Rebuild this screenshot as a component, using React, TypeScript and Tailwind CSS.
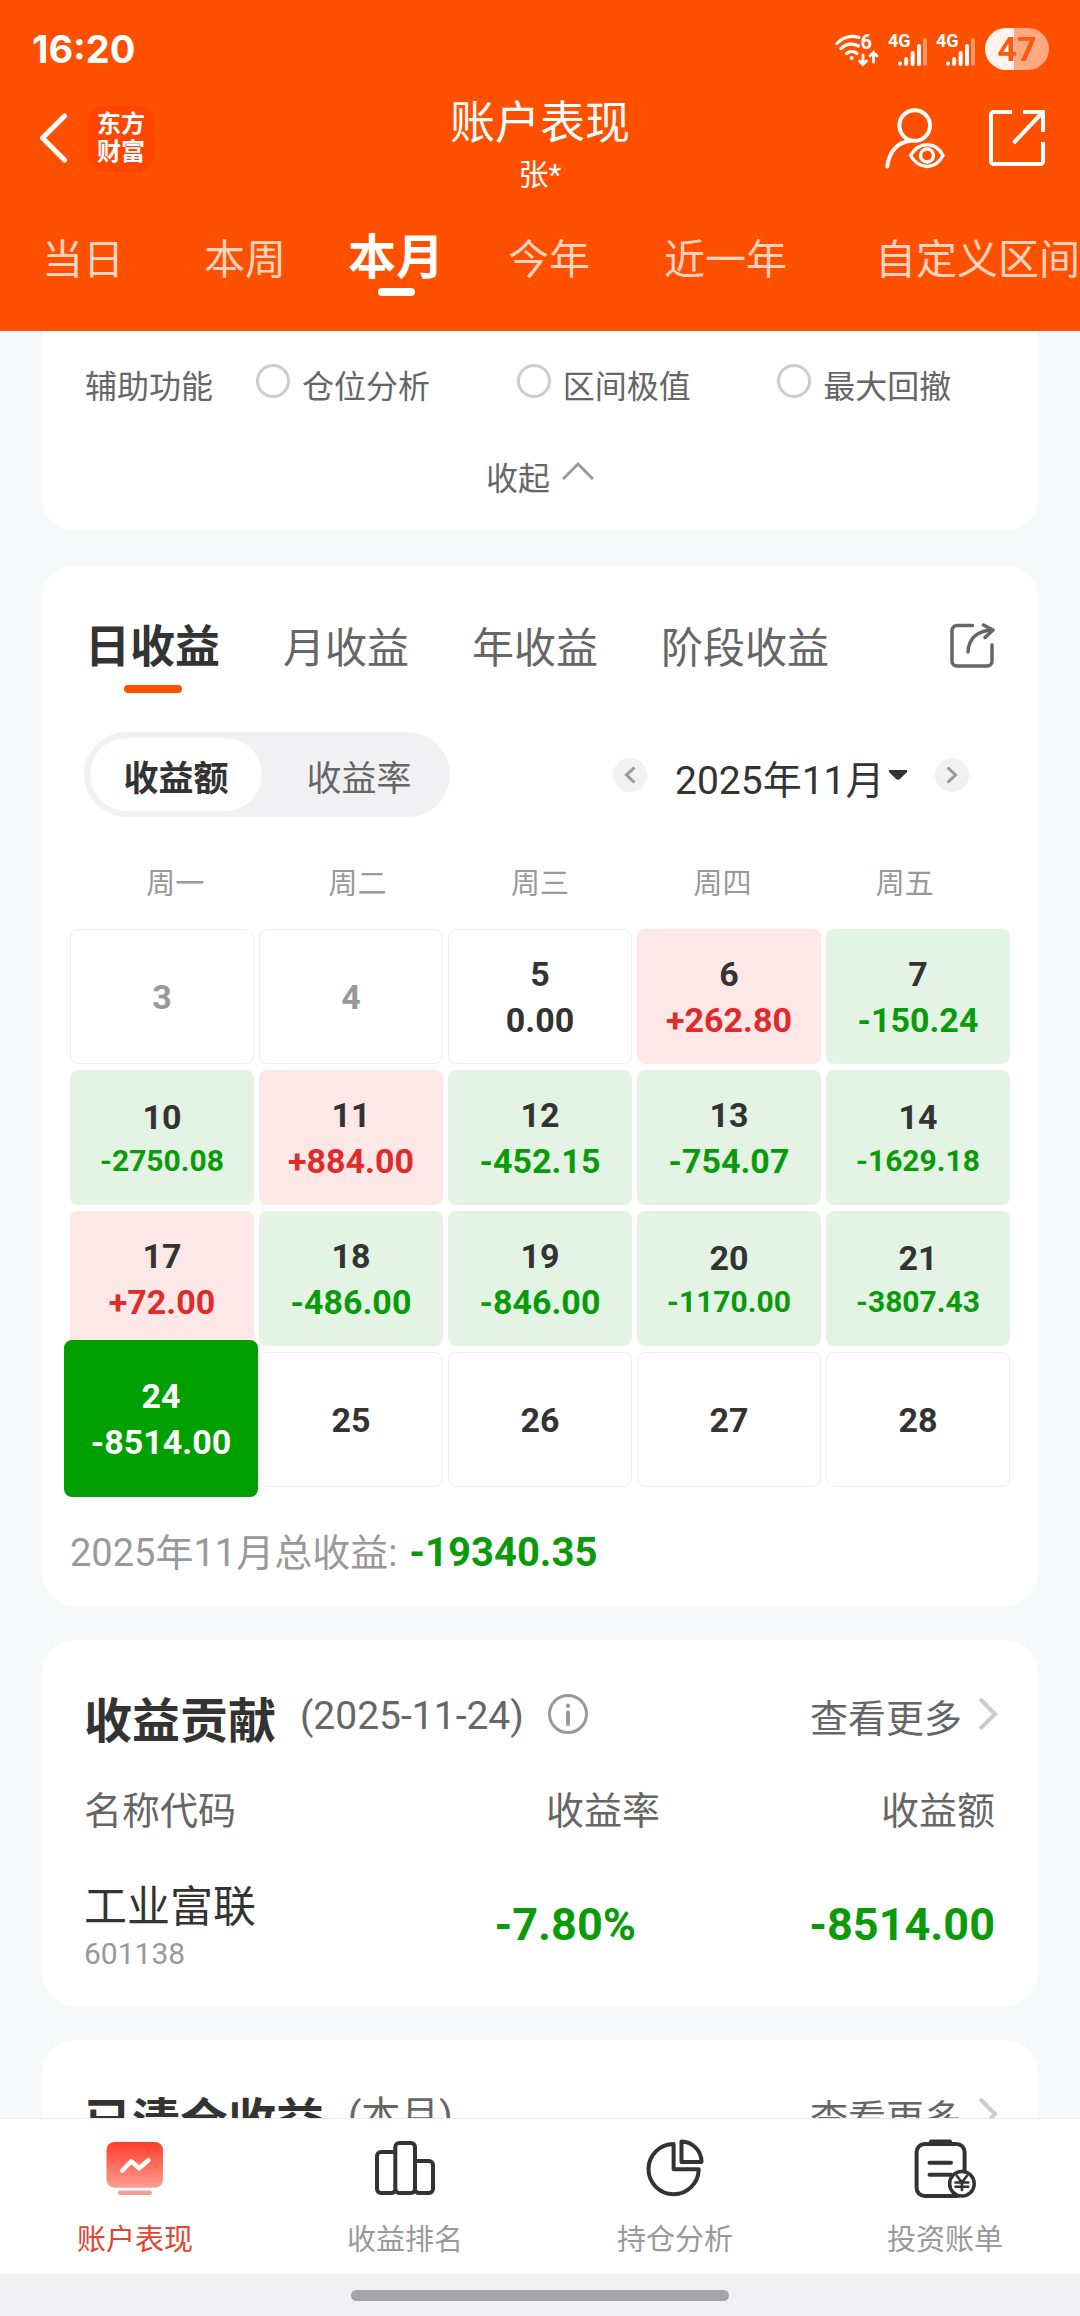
import { useState } from 'react';
import type { ReactNode } from 'react';
import clsx from 'clsx';

type DayState = 'past' | 'future' | 'flat' | 'up' | 'down';

interface Day {
  day: number;
  state: DayState;
  amount?: string;
}

const PERIODS = [
  { name: '当日', spacing: 'ml-[42px]' },
  { name: '本周', spacing: 'ml-20' },
  { name: '本月', spacing: 'ml-[62px]' },
  { name: '今年', spacing: 'ml-16' },
  { name: '近一年', spacing: 'ml-[74px]' },
  { name: '自定义区间', spacing: 'ml-22' },
];

const HELPERS = ['仓位分析', '区间极值', '最大回撤'];
const PROFIT_TABS = ['日收益', '月收益', '年收益', '阶段收益'];
const WEEKDAYS = ['周一', '周二', '周三', '周四', '周五'];
const MONTHS = ['2025年11月', '2025年10月'];

const DAYS: Day[] = [
  { day: 3, state: 'past' },
  { day: 4, state: 'past' },
  { day: 5, state: 'flat', amount: '0.00' },
  { day: 6, state: 'up', amount: '+262.80' },
  { day: 7, state: 'down', amount: '-150.24' },
  { day: 10, state: 'down', amount: '-2750.08' },
  { day: 11, state: 'up', amount: '+884.00' },
  { day: 12, state: 'down', amount: '-452.15' },
  { day: 13, state: 'down', amount: '-754.07' },
  { day: 14, state: 'down', amount: '-1629.18' },
  { day: 17, state: 'up', amount: '+72.00' },
  { day: 18, state: 'down', amount: '-486.00' },
  { day: 19, state: 'down', amount: '-846.00' },
  { day: 20, state: 'down', amount: '-1170.00' },
  { day: 21, state: 'down', amount: '-3807.43' },
  { day: 24, state: 'down', amount: '-8514.00' },
  { day: 25, state: 'future' },
  { day: 26, state: 'future' },
  { day: 27, state: 'future' },
  { day: 28, state: 'future' },
];

const CELL_STYLES: Record<DayState, string> = {
  past: 'border border-[#eeeeee] text-[#999999]',
  future: 'border border-[#eeeeee] text-[#333333]',
  flat: 'border border-[#eeeeee] text-[#333333]',
  up: 'bg-[#fde8e7] text-[#333333]',
  down: 'bg-[#e3f4e4] text-[#333333]',
};

const AMOUNT_STYLES: Record<DayState, string> = {
  past: '',
  future: '',
  flat: 'text-[#333333]',
  up: 'text-[#e12a2a]',
  down: 'text-[#0a9b0a]',
};

const WifiIcon = () => (
  <svg width="44" height="34" viewBox="0 0 44 34" className="overflow-visible" fill="none" stroke="white" strokeWidth="3.2" strokeLinecap="round" aria-hidden="true">
    <path d="M2 11.5C8.500 4.500 17 3.200 24 5.500" />
    <path d="M6 16.500C11 11.500 18 10.800 23.500 14" />
    <path d="M11.500 21.500C14.500 18.800 19 18.800 22 21.500" />
    <circle cx="16.700" cy="26" r="2" fill="white" stroke="none" />
    <text x="25.500" y="16.500" fill="white" stroke="none" fontSize="20" fontWeight="700">6</text>
    <path d="M28 23v9M24.500 29l3.500 3.500 3.500-3.500M38.500 30v-9M35 24l3.500-3.500 3.500 3.500" strokeWidth="2.800" />
  </svg>
);

const SignalIcon = () => (
  <svg width="38" height="34" viewBox="0 0 38 34" className="overflow-visible" fill="none" stroke="white" strokeWidth="4" strokeLinecap="round" aria-hidden="true">
    <text x="-1" y="15" fill="white" stroke="none" fontSize="18" fontWeight="700">4G</text>
    <path d="M11 31.500v.3M17.200 27v5M23.600 21v11M30 14v18" />
    <path d="M36 8v24" opacity="0.4" />
  </svg>
);

const BackIcon = () => (
  <svg width="28" height="50" viewBox="0 0 28 50" fill="none" stroke="white" strokeWidth="5" strokeLinecap="round" strokeLinejoin="round">
    <path d="M24.500 3L2.500 25l22 22" />
  </svg>
);

const UserViewIcon = () => (
  <svg width="60" height="61" viewBox="0 0 60 61" fill="none" stroke="white" strokeWidth="4" strokeLinecap="round">
    <circle cx="29.700" cy="17.500" r="15.300" />
    <path d="M2.300 58.500C4 43 13 34 26 32.800" />
    <path d="M25.500 47.500C30 40 35.500 36.800 42 36.800s12 3.200 16 10.700c-4 7.500-9.500 11-16 11s-12-3.500-16.500-11z" strokeWidth="3.400" strokeLinejoin="round" />
    <circle cx="42" cy="47.500" r="6.500" strokeWidth="3.400" />
  </svg>
);

const OpenIcon = () => (
  <svg width="56" height="56" viewBox="0 0 56 56" fill="none" stroke="white" strokeWidth="4">
    <path d="M23 2H4.500A2.500 2.500 0 0 0 2 4.500v47A2.500 2.500 0 0 0 4.500 54h47a2.500 2.500 0 0 0 2.500-2.500V32" />
    <path d="M34 2h20v20M53 3L24.500 33" />
  </svg>
);

const ShareIcon = () => (
  <svg width="45" height="45" viewBox="0 0 45 45" fill="none" stroke="#666666" strokeWidth="3.500" strokeLinecap="round">
    <path d="M22.500 2.500H7a5 5 0 0 0-5 5V38a5 5 0 0 0 5 5h30a5 5 0 0 0 5-5V22" />
    <path d="M18 29C18.500 16 27 7.500 42 7" />
    <path d="M33.500 2L43 7l-8 7.500" strokeLinejoin="round" />
  </svg>
);

const InfoIcon = () => (
  <svg width="40" height="40" viewBox="0 0 40 40" fill="none" stroke="#999999" strokeWidth="3" strokeLinecap="round">
    <circle cx="20" cy="20" r="18.500" />
    <path d="M20 18.500v11.500" strokeWidth="4" />
    <circle cx="20" cy="11.800" r="2.200" fill="#999999" stroke="none" />
  </svg>
);

const MoreIcon = () => (
  <svg width="20" height="34" viewBox="0 0 20 34" fill="none" stroke="#cccccc" strokeWidth="4">
    <path d="M2 2l15 15L2 32" />
  </svg>
);

const AccountIcon = () => (
  <svg width="64" height="64" viewBox="0 0 64 64" fill="none" aria-hidden="true">
    <defs>
      <linearGradient id="account" x1="0" y1="0" x2="0" y2="1">
        <stop offset="0" stopColor="#ff3d28" />
        <stop offset="1" stopColor="#ff9c92" />
      </linearGradient>
    </defs>
    <rect x="3.500" y="6" width="56.500" height="45.700" rx="8" fill="url(#account)" />
    <rect x="15" y="54.500" width="34" height="4.500" rx="2.200" fill="#f0a196" />
    <path d="M19.200 34.700l9-9.400 7.900 7 9.300-8" stroke="white" strokeWidth="4.500" strokeLinecap="round" strokeLinejoin="round" />
  </svg>
);

const RankIcon = () => (
  <svg width="64" height="64" viewBox="0 0 64 64" fill="none" stroke="#333333" strokeWidth="4" aria-hidden="true">
    <rect x="22.300" y="7" width="19.700" height="50" rx="4" />
    <path d="M22.300 16.500c-1-.5-2-.5-3-.5H8a4 4 0 0 0-4 4v33a4 4 0 0 0 4 4h10.300c1.500 0 3-1 4-2" />
    <path d="M42 25.500c1-.5 1.500-.5 2.500-.5H56a4 4 0 0 1 4 4v24a4 4 0 0 1-4 4H46c-1.500 0-3-1-4-2" />
  </svg>
);

const PieIcon = () => (
  <svg width="64" height="64" viewBox="0 0 64 64" fill="none" stroke="#333333" strokeWidth="4" strokeLinejoin="round" aria-hidden="true">
    <path d="M30.600 8v25.200h25.100A25.100 25.100 0 1 1 30.600 8z" />
    <path d="M38.500 5.500V26h20A20.500 20.500 0 0 0 38.500 5.500z" />
  </svg>
);

const BillIcon = () => (
  <svg width="64" height="64" viewBox="0 0 64 64" fill="none" stroke="#333333" strokeWidth="4" strokeLinecap="round" aria-hidden="true">
    <rect x="3.600" y="8" width="48" height="52" rx="8" />
    <rect x="16" y="3.500" width="23" height="5" rx="2" fill="#333333" stroke="none" />
    <path d="M16.500 26.700H38M16.500 38.700H38" />
    <circle cx="48.900" cy="47.700" r="12.300" fill="white" strokeWidth="3.500" />
    <path d="M44 40l4.900 6.500L53.800 40M48.900 46.500V54M42.500 46.500h12.800M42.500 50.800h12.800" strokeWidth="2.600" />
  </svg>
);

const NAV_ITEMS = [
  { name: '账户表现', icon: <AccountIcon />, active: true },
  { name: '收益排名', icon: <RankIcon />, active: false },
  { name: '持仓分析', icon: <PieIcon />, active: false },
  { name: '投资账单', icon: <BillIcon />, active: false },
];

const StatusBar = () => (
  <div className="flex h-[98px] items-center justify-between pl-8 pr-[31px]">
    <span className="font-['Inter'] text-[38px] font-bold leading-none">16:20</span>
    <div className="flex items-center gap-[10px]">
      <WifiIcon />
      <SignalIcon />
      <SignalIcon />
      <span className="flex h-[42px] w-16 items-center justify-center rounded-full bg-[linear-gradient(to_right,#fff3ec_45%,#ffa882_45%)] text-[34px] font-bold leading-none text-[#fa5a10]">
        47
      </span>
    </div>
  </div>
);

const Header = () => {
  const [period, setPeriod] = useState('本月');

  return (
    <header className="shrink-0 overflow-hidden bg-[#ff5000] text-white">
      <StatusBar />

      <div className="grid grid-cols-[1fr_auto_1fr] items-start">
        <div className="flex h-20 items-center gap-5 pl-10">
          <button aria-label="返回">
            <BackIcon />
          </button>
          <div className="flex h-[67px] w-[66px] flex-col items-center justify-center rounded-2xl bg-[#ff4600] text-2xl font-bold leading-7">
            <span>东方</span>
            <span>财富</span>
          </div>
        </div>

        <div className="text-center">
          <h1 className="text-[45px] leading-[52px]">账户表现</h1>
          <p className="text-[30px] leading-[50px]">张*</p>
        </div>

        <div className="flex h-20 items-center justify-end gap-11 pr-[35px]">
          <button aria-label="切换账户">
            <UserViewIcon />
          </button>
          <button aria-label="分享">
            <OpenIcon />
          </button>
        </div>
      </div>

      <nav className="flex h-[131px] items-baseline whitespace-nowrap pt-7">
        {PERIODS.map(({ name, spacing }) => (
          <button
            key={name}
            onClick={() => setPeriod(name)}
            className={clsx(
              'flex shrink-0 flex-col items-center',
              spacing,
              name === period ? 'text-5xl/[60px] font-bold' : 'text-[41px]/[62px] text-white/75'
            )}
          >
            {name}
            {name === period && <span className="h-2 w-[37px] rounded-full bg-white" />}
          </button>
        ))}
      </nav>
    </header>
  );
};

const HelperCard = () => (
  <section className="rounded-b-[33px] bg-white pb-[29px] pt-[33px] text-[32px] leading-[46px] text-[#666666]">
    <div className="flex gap-[43px] pl-[43px]">
      <span>辅助功能</span>
      <div className="grid flex-1 grid-cols-3">
        {HELPERS.map((name) => (
          <label key={name} className="flex items-start gap-3">
            <input
              type="radio"
              name="helper"
              className="size-[34px] appearance-none rounded-full border-3 border-[#cccccc] checked:border-[#ff5000]"
            />
            {name}
          </label>
        ))}
      </div>
    </div>
    <button className="mx-auto mt-[46px] flex items-start gap-3">
      收起
      <svg width="32" height="32" viewBox="0 0 32 32" fill="none" stroke="#999999" strokeWidth="3">
        <path d="M1 23L16 8l15 15" />
      </svg>
    </button>
  </section>
);

const DayCell = ({ day, state, amount, selected }: Day & { selected: boolean }) => {
  // amounts that run past seven characters drop to a smaller size
  const small = !selected && amount && amount.length > 7;

  return (
    <button
      className={clsx(
        'flex flex-col items-center justify-center rounded-lg text-[34px] font-bold leading-[46px]',
        selected ? 'z-10 -mb-[10px] -ml-[6px] -mr-1 -mt-3 bg-[#00a000] text-white' : CELL_STYLES[state]
      )}
    >
      <span>{day}</span>
      {amount && (
        <span className={clsx(small && 'text-3xl/[42px]', !selected && AMOUNT_STYLES[state])}>{amount}</span>
      )}
    </button>
  );
};

const CalendarCard = () => {
  const [tab, setTab] = useState('日收益');
  const [month, setMonth] = useState(MONTHS[0]);

  return (
    <section className="rounded-[33px] bg-white pb-[25px] pt-[52px]">
      <div className="flex items-start justify-between px-[43px]">
        <div className="flex items-baseline gap-[63px]">
          {PROFIT_TABS.map((name) => (
            <button
              key={name}
              onClick={() => setTab(name)}
              className={clsx(
                'flex flex-col items-center',
                name === tab ? 'text-[45px]/[62px] font-bold text-[#333333]' : 'text-[42px]/[62px] text-[#666666]'
              )}
            >
              {name}
              {name === tab && <span className="mt-[6px] h-2 w-[58px] rounded-full bg-[#ff5000]" />}
            </button>
          ))}
        </div>
        <button aria-label="分享" className="flex h-14 items-center">
          <ShareIcon />
        </button>
      </div>

      <div className="mt-[39px] flex items-center justify-between pl-[42px] pr-[69px]">
        <div className="flex h-[85px] w-[366px] rounded-full bg-[#f1f1f3] p-[6px] text-[35px]">
          <button className="w-[172px] rounded-full bg-white pt-3 font-bold text-[#333333]">收益额</button>
          <button className="flex-1 pl-3 pt-3 text-[#666666]">收益率</button>
        </div>
        <div className="flex items-center">
          <button aria-label="上个月" className="flex size-[34px] items-center justify-center rounded-full bg-[#f1f1f3]">
            <svg width="12" height="18" viewBox="0 0 12 18" fill="none" stroke="#999999" strokeWidth="3">
              <path d="M10.500 1.500L2.500 9l8 7.500" />
            </svg>
          </button>
          <div className="mx-7 flex items-center gap-1">
            <select
              aria-label="月份"
              value={month}
              onChange={(e) => setMonth(e.target.value)}
              className="appearance-none pt-3 text-[39px] leading-[60px] text-[#333333]"
            >
              {MONTHS.map((m) => (
                <option key={m}>{m}</option>
              ))}
            </select>
            <svg width="18" height="10" viewBox="0 0 18 10" fill="#333333" aria-hidden="true">
              <path d="M0 0h18v2l-7 7q-2 1.500-4 0L0 2z" />
            </svg>
          </div>
          <button aria-label="下个月" className="flex size-[34px] items-center justify-center rounded-full bg-[#f1f1f3]">
            <svg width="12" height="18" viewBox="0 0 12 18" fill="none" stroke="#999999" strokeWidth="3">
              <path d="M1.500 1.500l8 7.500-8 7.500" />
            </svg>
          </button>
        </div>
      </div>

      <div className="mt-[47px] grid grid-cols-5 px-[42px] text-center text-[29px] leading-10 text-[#999999]">
        {WEEKDAYS.map((name) => (
          <span key={name}>{name}</span>
        ))}
      </div>

      <div className="mt-[25px] grid auto-rows-[135px] grid-cols-5 gap-x-[5px] gap-y-[6px] px-7">
        {DAYS.map((item) => (
          <DayCell key={item.day} {...item} selected={item.day === 24} />
        ))}
      </div>

      <p className="mt-[38px] flex items-baseline gap-3 px-7 text-[38px] leading-[56px] text-[#999999]">
        {month}总收益:
        <strong className="text-[40px] text-[#0a9b0a]">-19340.35</strong>
      </p>
    </section>
  );
};

interface SectionTitleProps {
  title: string;
  note: string;
  children?: ReactNode;
}

const SectionTitle = ({ title, note, children }: SectionTitleProps) => (
  <div className="flex items-start text-[39px] leading-[52px] text-[#666666]">
    <h2 className="text-5xl/[64px] font-bold text-[#333333]">{title}</h2>
    <span className="ml-6">{note}</span>
    {children}
    <a href="#more" className="ml-auto flex items-start gap-4 text-[38px] leading-[58px]">
      查看更多
      <span className="flex h-[48px] items-center">
        <MoreIcon />
      </span>
    </a>
  </div>
);

const ContributionCard = () => (
  <section className="rounded-[33px] bg-white pb-[33px] pl-[42px] pr-10 pt-[50px]">
    <SectionTitle title="收益贡献" note="(2025-11-24)">
      <button aria-label="说明" className="ml-6 flex h-[48px] items-center">
        <InfoIcon />
      </button>
    </SectionTitle>
    <table className="mt-8 w-full table-fixed">
      <thead>
        <tr className="text-[38px] leading-[50px] text-[#666666]">
          <th className="text-left font-normal">名称代码</th>
          <th className="w-[272px] text-right font-normal">收益率</th>
          <th className="w-[338px] pr-[3px] text-right font-normal">收益额</th>
        </tr>
      </thead>
      <tbody>
        <tr className="text-[45px] font-bold text-[#0a9b0a]">
          <td className="pt-[43px] font-normal">
            <div className="text-[43px] leading-[56px] text-[#333333]">工业富联</div>
            <div className="text-3xl/[38px] text-[#999999]">601138</div>
          </td>
          <td className="pr-6 pt-10 text-right">-7.80%</td>
          <td className="pr-[3px] pt-10 text-right">-8514.00</td>
        </tr>
      </tbody>
    </table>
  </section>
);

const BottomNav = () => (
  <footer className="shrink-0 bg-[#f0f0f2]">
    <nav className="grid grid-cols-4 border-t border-[#ebebed] bg-white pb-[14px] pt-[17px]">
      {NAV_ITEMS.map(({ name, icon, active }) => (
        <a
          key={name}
          href="#nav"
          className={clsx(
            'flex flex-col items-center gap-5 text-[29px] leading-10',
            active ? 'text-[#e0452f]' : 'text-[#999999]'
          )}
        >
          {icon}
          {name}
        </a>
      ))}
    </nav>
    <div className="flex h-[42px] items-center justify-center">
      <div className="h-[11px] w-[35%] rounded-full bg-[#a5a5a8]" />
    </div>
  </footer>
);

const App = () => (
  <div className="flex h-screen flex-col bg-[#f7f8fa] font-['Roboto','Noto_Sans_CJK_SC',sans-serif]">
    <Header />
    <main className="flex min-h-0 flex-1 flex-col gap-[34px] overflow-y-auto px-[42px] [scrollbar-width:none] *:shrink-0">
      <HelperCard />
      <CalendarCard />
      <ContributionCard />
      <section className="rounded-t-[33px] bg-white pb-[50px] pl-[42px] pr-10 pt-[50px]">
        <SectionTitle title="已清仓收益" note="(本月)" />
      </section>
    </main>
    <BottomNav />
  </div>
);

export default App;
